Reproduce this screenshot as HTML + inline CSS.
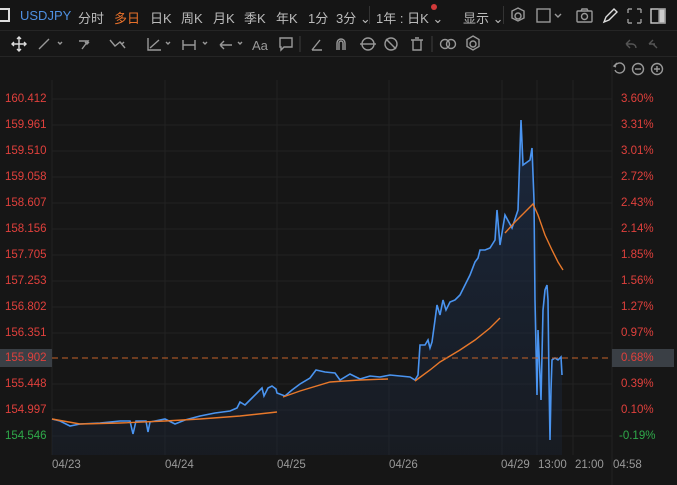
<!DOCTYPE html>
<html><head><meta charset="utf-8"><style>
body{margin:0;width:677px;height:485px;background:#161616;overflow:hidden;font-family:"Liberation Sans","Noto Sans CJK SC",sans-serif;color:#bbb;position:relative}
.t{position:absolute;font-size:13px;white-space:nowrap}
.bar1{position:absolute;left:0;top:0;width:677px;height:30px;background:#151515;border-bottom:1px solid #252525}
.bar2{position:absolute;left:0;top:31px;width:677px;height:25px;border-bottom:1px solid #252525}
.l{position:absolute;left:5px;font-size:11.5px;color:#e0403c}
.r{position:absolute;left:621px;font-size:11.5px;color:#e0403c}
.x{position:absolute;top:459px;font-size:11.5px;color:#999}
</style></head><body>
<div class="bar1"></div><div class="bar2"></div>
<div style="position:absolute;left:0;top:8px;width:10px;height:14px;border:2px solid #ddd;border-left:none;box-sizing:border-box"></div>
<div class="t" style="left:20px;top:8px;color:#4e8fe0">USDJPY</div>
<div class="t" style="left:78px;top:8px">分时</div>
<div class="t" style="left:114px;top:8px;color:#e8712a">多日</div>
<div class="t" style="left:150px;top:8px">日K</div>
<div class="t" style="left:181px;top:8px">周K</div>
<div class="t" style="left:213px;top:8px">月K</div>
<div class="t" style="left:244px;top:8px">季K</div>
<div class="t" style="left:276px;top:8px">年K</div>
<div class="t" style="left:308px;top:8px">1分</div>
<div class="t" style="left:336px;top:8px">3分 ⌄</div>
<div style="position:absolute;left:369px;top:6px;width:1px;height:18px;background:#333"></div>
<div class="t" style="left:376px;top:8px">1年 : 日K ⌄</div>
<div style="position:absolute;left:431px;top:4px;width:6px;height:6px;border-radius:50%;background:#d23a3a"></div>
<div class="t" style="left:463px;top:8px">显示 ⌄</div>
<div style="position:absolute;left:503px;top:6px;width:1px;height:18px;background:#333"></div>
<svg style="position:absolute;left:0;top:0" width="677" height="80" fill="none" stroke="#999" stroke-width="1.4">
<circle cx="518" cy="16" r="3"/><path d="M518 8l6 3v7l-6 3-6-3v-7z"/>
<rect x="537" y="9" width="13" height="13"/><path d="M555 14l3 3 3-3"/>
<rect x="577" y="11" width="15" height="11" rx="1"/><circle cx="584.5" cy="16.5" r="3"/><path d="M581 11l1-2h5l1 2"/>
<path d="M604 22l2-5 8-8 3 3-8 8z" stroke="#ddd"/>
<path d="M628 9h4M628 9v4M641 9h-4M641 9v4M628 23h4M628 23v-4M641 23h-4M641 23v-4"/>
<rect x="651" y="9" width="14" height="14" stroke="#ccc"/><rect x="659" y="9" width="6" height="14" fill="#ccc"/>
<path d="M19 37v14M12 44h14M17 39l2-2 2 2M17 49l2 2 2-2M14 42l-2 2 2 2M24 42l2 2-2 2" stroke="#ddd"/>
<path d="M39 49l10-10M58 42l2 2 2-2M79 41h9l-6 8M85 42l2 2 2-2M110 40l5 6 5-4 5 6M120 42l2 2 2-2M148 38v12h13M150 48l9-8M166 42l2 2 2-2M183 40v10M183 45h12M195 40v10M203 42l2 2 2-2M220 45h12M220 45l4-4M220 45l4 4M238 42l2 2 2-2"/>
<text x="252" y="50" fill="#999" stroke="none" font-size="13" font-family="Liberation Sans">Aa</text>
<path d="M280 38h12v9h-8l-3 3v-3h-1z"/>
<path d="M300 36v16" stroke="#333"/>
<path d="M312 50h10M312 50l8-10M337 50v-7a4 4 0 0 1 8 0v7M339 50v-7a2 2 0 0 1 4 0v7"/>
<circle cx="368" cy="44" r="6"/><path d="M360 44h16"/>
<circle cx="391" cy="44" r="6"/><path d="M386 39l10 10"/>
<path d="M411 40h12M413 40v10h8v-10M415 38h4"/>
<path d="M432 36v16" stroke="#333"/>
<circle cx="445" cy="44" r="4.5"/><circle cx="451" cy="44" r="4.5"/>
<circle cx="473" cy="44" r="3"/><path d="M473 36l6 3.5v7l-6 3.5-6-3.5v-7z"/>
<path d="M626 44l4-4M626 44l4 4M626 44h6a4 4 0 0 1 4 4M649 44l4-4M653 44l4 4M649 44h6" stroke="#555"/>
<path d="M617 63l-3 3 2 1M615 66a5 5 0 1 1 0 4"/>
<circle cx="638" cy="69" r="5.5"/><path d="M635 69h6"/>
<circle cx="657" cy="69" r="5.5"/><path d="M654 69h6M657 66v6"/>
</svg>
<svg style="position:absolute;left:0;top:0" width="677" height="485">
<defs><linearGradient id="g" x1="0" y1="0" x2="0" y2="1"><stop offset="0" stop-color="#1f3a66" stop-opacity=".5"/><stop offset="1" stop-color="#1a2538" stop-opacity=".35"/></linearGradient></defs>
<g stroke="#222" stroke-width="1">
<path d="M52 99H612M52 125H612M52 151H612M52 177H612M52 203H612M52 229H612M52 255H612M52 281H612M52 307H612M52 333H612M52 384H612M52 410H612M52 436H612"/>
<path d="M52 80V455M165 80V455M277 80V455M389 80V455M502 80V455M537 80V455M573 80V455M612 60V485"/>
</g>
<path d="M52 419L60 421 70 426 80 424 100 423 120 421 130 421 133 434 136 421 146 421 148 432 150 422 165 419 175 424 185 420 200 416 215 413 230 411 237 408 240 402 245 405 252 398 258 392 262 388 264 396 268 388 272 386 276 389 277 393 285 396 292 390 300 384 310 378 316 370 325 372 335 373 340 380 350 374 360 379 370 376 380 377 390 375 400 376 410 377 415 380 418 375 420 345 425 345 428 340 430 348 432 342 435 320 437 305 440 315 443 300 446 310 450 302 455 300 460 295 465 285 470 275 475 262 478 258 480 250 485 250 490 248 495 240 497 210 500 245 505 215 512 228 518 210 521 120 523 165 530 160 532 148 534 200 535 300 537 395 538 330 541 400 543 310 545 290 547 285 548 300 549 380 550 440 551 390 552 360 555 358 558 360 561 357 562 375 562 455 52 455Z" fill="url(#g)"/>
<path d="M52 419L60 421 70 426 80 424 100 423 120 421 130 421 133 434 136 421 146 421 148 432 150 422 165 419 175 424 185 420 200 416 215 413 230 411 237 408 240 402 245 405 252 398 258 392 262 388 264 396 268 388 272 386 276 389 277 393 285 396 292 390 300 384 310 378 316 370 325 372 335 373 340 380 350 374 360 379 370 376 380 377 390 375 400 376 410 377 415 380 418 375 420 345 425 345 428 340 430 348 432 342 435 320 437 305 440 315 443 300 446 310 450 302 455 300 460 295 465 285 470 275 475 262 478 258 480 250 485 250 490 248 495 240 497 210 500 245 505 215 512 228 518 210 521 120 523 165 530 160 532 148 534 200 535 300 537 395 538 330 541 400 543 310 545 290 547 285 548 300 549 380 550 440 551 390 552 360 555 358 558 360 561 357 562 375" fill="none" stroke="#4a94f0" stroke-width="1.6"/>
<g fill="none" stroke="#e8782a" stroke-width="1.4">
<path d="M52 419L80 424 120 423 165 421 200 419 240 416 277 412"/>
<path d="M283 397L300 391 330 382 360 380 388 379"/>
<path d="M415 381L430 370 440 362 460 350 475 340 490 328 500 318"/>
<path d="M505 233L515 222 525 212 533 204 538 215 545 235 552 250 558 262 563 270"/>
</g>
<path d="M52 358H612" stroke="#c4632a" stroke-dasharray="6 4" stroke-width="1"/>
</svg>
<div style="position:absolute;left:0;top:349px;width:52px;height:18px;background:#3a3f45"></div>
<div style="position:absolute;left:612px;top:349px;width:62px;height:18px;background:#3a3f45"></div>
<div class="l" style="top:93px">160.412</div><div class="l" style="top:119px">159.961</div><div class="l" style="top:145px">159.510</div><div class="l" style="top:171px">159.058</div><div class="l" style="top:197px">158.607</div><div class="l" style="top:223px">158.156</div><div class="l" style="top:249px">157.705</div><div class="l" style="top:275px">157.253</div><div class="l" style="top:301px">156.802</div><div class="l" style="top:327px">156.351</div><div class="l" style="top:352px">155.902</div><div class="l" style="top:378px">155.448</div><div class="l" style="top:404px">154.997</div><div class="l" style="top:430px;color:#2faa4a">154.546</div>
<div class="r" style="top:93px">3.60%</div><div class="r" style="top:119px">3.31%</div><div class="r" style="top:145px">3.01%</div><div class="r" style="top:171px">2.72%</div><div class="r" style="top:197px">2.43%</div><div class="r" style="top:223px">2.14%</div><div class="r" style="top:249px">1.85%</div><div class="r" style="top:275px">1.56%</div><div class="r" style="top:301px">1.27%</div><div class="r" style="top:327px">0.97%</div><div class="r" style="top:352px">0.68%</div><div class="r" style="top:378px">0.39%</div><div class="r" style="top:404px">0.10%</div><div class="r" style="top:430px;left:619px;color:#2faa4a">-0.19%</div>
<div class="x" style="left:52px">04/23</div><div class="x" style="left:165px">04/24</div><div class="x" style="left:277px">04/25</div><div class="x" style="left:389px">04/26</div><div class="x" style="left:501px">04/29</div><div class="x" style="left:538px">13:00</div><div class="x" style="left:575px">21:00</div><div class="x" style="left:613px">04:58</div>
</body></html>
